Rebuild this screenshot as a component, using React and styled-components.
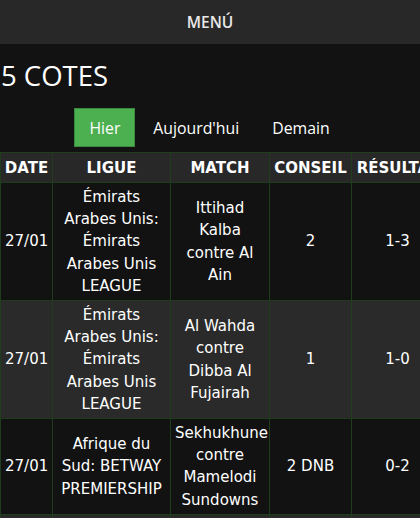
import React from 'react';
import styled, { createGlobalStyle } from 'styled-components';

const GlobalStyle = createGlobalStyle`
    html, body {
        margin: 0;
        padding: 0;
        background-color: #121212;
        color: #ffffff;
        overflow: hidden;
    }
`

const Header = styled.header`
    background-color: #282828;
    height: 44px;
    display: flex;
    justify-content: center;
    align-items: center;
    font-family: "Open Sans", sans-serif;
    font-size: 15.5px;
    font-weight: 600;
    color: #e8e8e8;
`

const Main = styled.main`
    padding-top: 10px;
`

const Title = styled.h1`
    margin: 0 0 0 1px;
    font-family: "Open Sans", sans-serif;
    font-size: 27.5px;
    font-weight: 400;
    line-height: 44px;
`

const Tabs = styled.div`
    display: flex;
    justify-content: center;
    margin-top: 10px;
    padding-left: 2px;
`

const Tab = styled.button`
    font-family: "Open Sans", sans-serif;
    font-size: 15.8px;
    color: #ffffff;
    background-color: ${props => props.active ? '#4caf50' : 'transparent'};
    border: 1px solid ${props => props.active ? '#3b8a3e' : 'transparent'};
    height: 39px;
    padding: 0 14px;
    margin-right: 3px;
    cursor: pointer;
`

const Table = styled.table`
    margin-top: 5px;
    border-collapse: collapse;
    font-family: "DejaVu Sans", Verdana, sans-serif;
    font-size: 15px;
    color: #ffffff;
    table-layout: fixed;
    width: 443px;
`

const Th = styled.th`
    background-color: #282828;
    border: 1px solid #1f3d1c;
    height: 29px;
    padding: 0 3px;
    font-weight: 700;
    text-align: center;
    white-space: nowrap;
    overflow: hidden;
`

const Row = styled.tr`
    background-color: ${props => props.alt ? '#2a2a2a' : '#121212'};
`

const Td = styled.td`
    border: 1px solid #1f3d1c;
    padding: 2.5px 4px;
    text-align: center;
    line-height: 22.4px;
    vertical-align: middle;
`

const rows = [
    { date: '27/01', ligue: 'Émirats Arabes Unis: Émirats Arabes Unis LEAGUE', match: 'Ittihad Kalba contre Al Ain', conseil: '2', result: '1-3' },
    { date: '27/01', ligue: 'Émirats Arabes Unis: Émirats Arabes Unis LEAGUE', match: 'Al Wahda contre Dibba Al Fujairah', conseil: '1', result: '1-0' },
    { date: '27/01', ligue: 'Afrique du Sud: BETWAY PREMIERSHIP', match: 'Sekhukhune contre Mamelodi Sundowns', conseil: '2 DNB', result: '0-2' },
    { date: '27/01', ligue: 'Afrique du Sud: BETWAY PREMIERSHIP', match: 'Chippa United contre Orlando Pirates', conseil: '2', result: '0-1' },
]

function App() {
    return (
        <>
            <GlobalStyle />
            <Header>MENÚ</Header>
            <Main>
                <Title>5 COTES</Title>
                <Tabs>
                    <Tab active>Hier</Tab>
                    <Tab>Aujourd'hui</Tab>
                    <Tab>Demain</Tab>
                </Tabs>
                <Table>
                    <colgroup>
                        <col style={{ width: 52 }} />
                        <col style={{ width: 118 }} />
                        <col style={{ width: 99 }} />
                        <col style={{ width: 82 }} />
                        <col style={{ width: 92 }} />
                    </colgroup>
                    <thead>
                        <tr>
                            <Th>DATE</Th>
                            <Th>LIGUE</Th>
                            <Th>MATCH</Th>
                            <Th>CONSEIL</Th>
                            <Th>RÉSULTAT</Th>
                        </tr>
                    </thead>
                    <tbody>
                        {rows.map((r, i) => (
                            <Row key={i} alt={i % 2 === 1}>
                                <Td>{r.date}</Td>
                                <Td>{r.ligue}</Td>
                                <Td>{r.match}</Td>
                                <Td>{r.conseil}</Td>
                                <Td>{r.result}</Td>
                            </Row>
                        ))}
                    </tbody>
                </Table>
            </Main>
        </>
    )
}

export default App;
